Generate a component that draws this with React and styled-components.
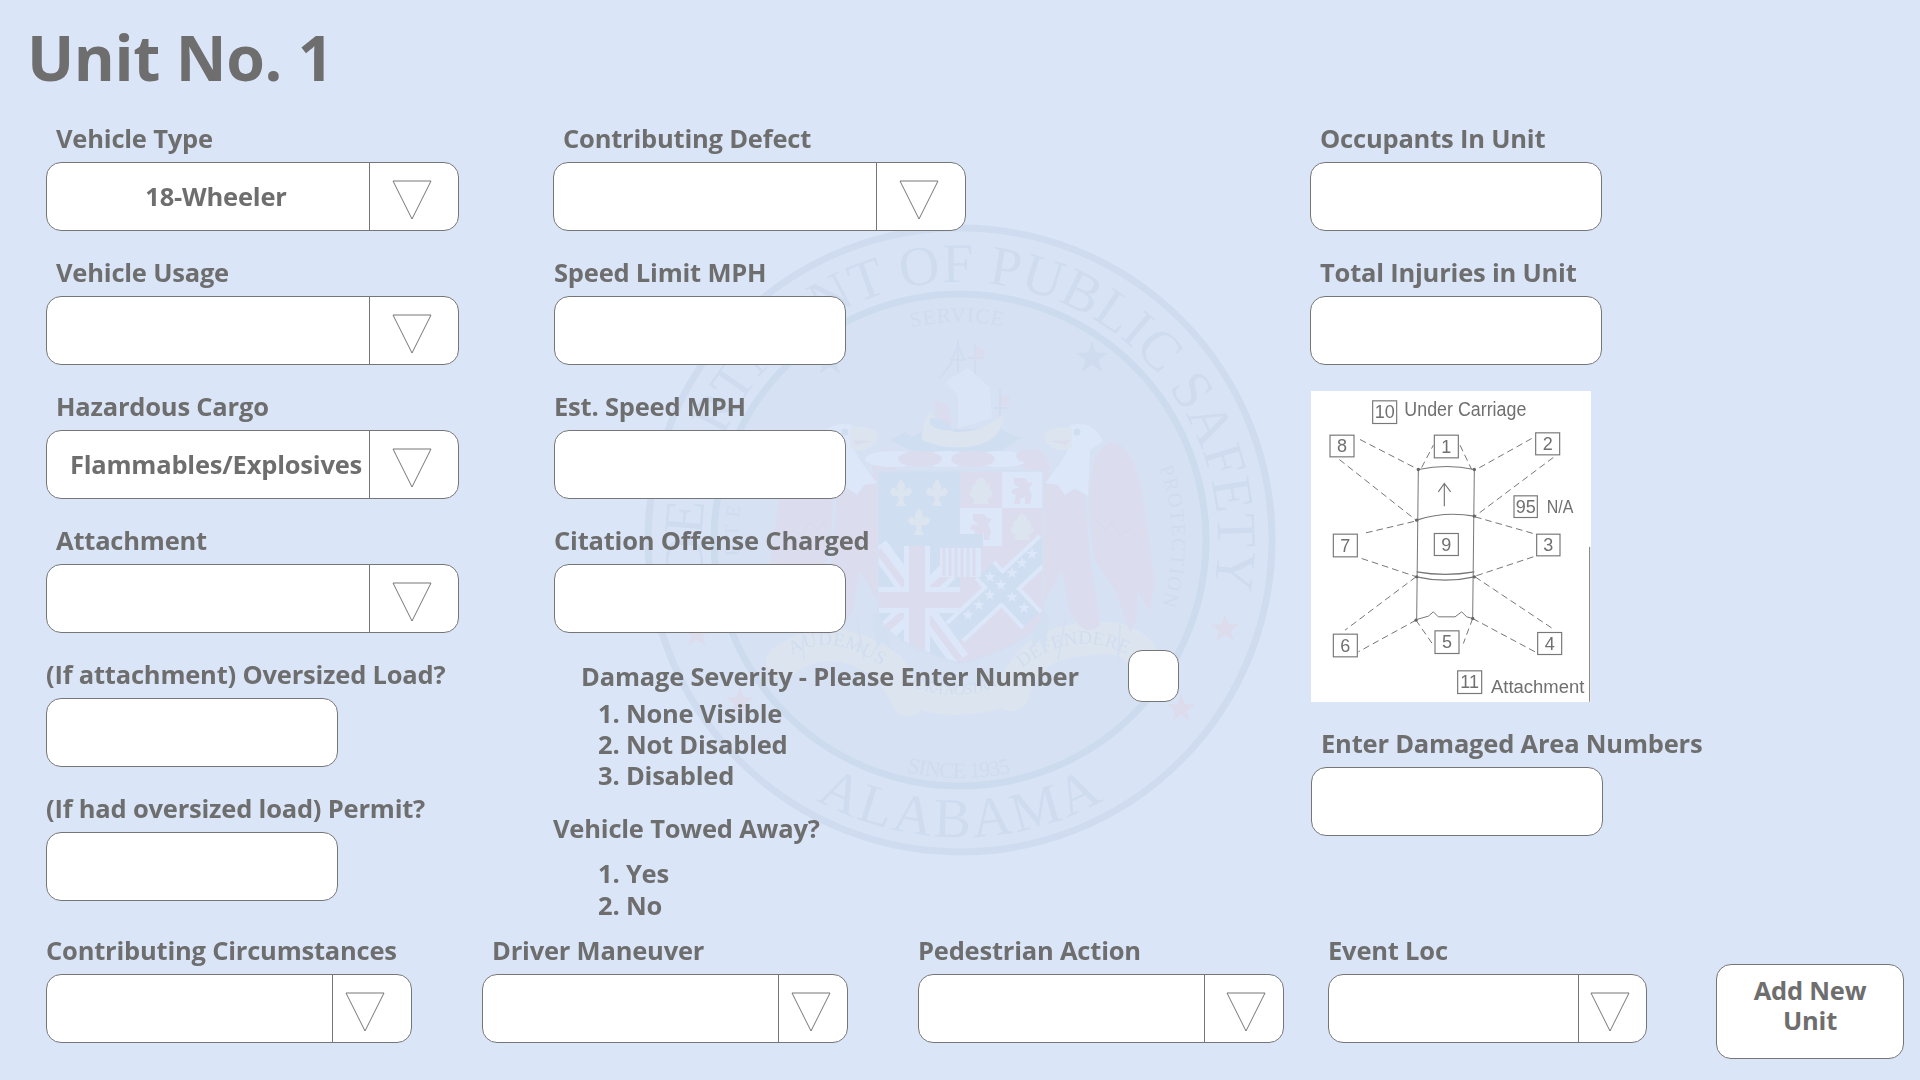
import React from "react";
import styled, { createGlobalStyle } from "styled-components";

const GlobalStyle = createGlobalStyle`
  html, body { margin: 0; padding: 0; background: #dae6f7; }
  * { box-sizing: border-box; }
`;

const Page = styled.div`
  position: relative;
  width: 1920px;
  height: 1080px;
  overflow: hidden;
  background: #dae6f7;
  color: #6e6e6e;
  font-family: "Open Sans", "Noto Sans", sans-serif;
  font-weight: 700;
  font-size: 25.5px;
  letter-spacing: -0.2px;
`;

const Watermark = styled.svg`
  position: absolute;
  left: 640px;
  top: 220px;
  width: 640px;
  height: 640px;
`;

const Content = styled.div`
  position: relative;
`;

const Title = styled.h1`
  margin: 0;
  height: 124px;
  padding: 16px 0 0 27px;
  font-size: 62.5px;
  line-height: 82px;
  font-weight: 700;
  letter-spacing: -0.4px;
`;

const Columns = styled.div`
  display: grid;
  grid-template-columns: 507px 757px 1fr;
  padding-left: 46px;
  height: 776px;
`;

const Column = styled.div`
  display: flex;
  flex-direction: column;
  align-items: flex-start;
  gap: 27px;
`;

const Field = styled.div`
  display: flex;
  flex-direction: column;
  align-items: flex-start;
  margin-left: ${(p) => p.$shift || 0}px;
`;

const Label = styled.div`
  height: 30px;
  line-height: 28px;
  margin-bottom: 8px;
  padding-left: ${(p) => p.$indent || 0}px;
  white-space: nowrap;
`;

const Input = styled.div`
  width: ${(p) => p.$w || 292}px;
  height: 69px;
  background: #fff;
  border: 1px solid #767676;
  border-radius: 15px;
`;

const SelectBox = styled.div`
  display: flex;
  width: ${(p) => p.$w}px;
  height: 69px;
  background: #fff;
  border: 1px solid #767676;
  border-radius: 15px;
`;

const SelectValue = styled.div`
  flex: 1;
  display: flex;
  align-items: center;
  justify-content: center;
  padding: 0 0 2px 16px;
  white-space: nowrap;
  overflow: hidden;
`;

const SelectArrow = styled.div`
  display: flex;
  justify-content: center;
  align-items: center;
  width: ${(p) => p.$w}px;
  padding: 6px ${(p) => p.$right ?? 4}px 0 ${(p) => p.$left || 0}px;
  border-left: 1px solid #767676;
`;

const DamageRow = styled.div`
  display: flex;
  align-items: center;
  height: 52px;
  margin: -10px 0 -4px 28px;
`;

const DamageLabel = styled.div`
  width: 547px;
  white-space: nowrap;
`;

const SmallInput = styled.div`
  width: 51px;
  height: 52px;
  background: #fff;
  border: 1px solid #767676;
  border-radius: 14px;
`;

const MiddleStack = styled.div`
  display: flex;
  flex-direction: column;
`;

const OptionList = styled.ol`
  margin: ${(p) => p.$top || 0}px 0 0;
  padding: 0 0 0 45px;
  list-style: none;
  line-height: ${(p) => p.$line || 31}px;
`;

const PlainLabel = styled.div`
  height: 30px;
  line-height: 30px;
  margin-top: 22px;
`;

const Diagram = styled.svg`
  display: block;
  width: 280px;
  height: 311px;
  margin: -1px 0 0 1px;
  background: #fff;
  filter: blur(0.4px);
  font-weight: 400;
  letter-spacing: 0;
`;

const BottomRow = styled.div`
  display: flex;
  align-items: flex-start;
  padding: 36px 0 0 46px;
`;

const BottomField = styled.div`
  width: ${(p) => p.$w}px;
  margin-right: ${(p) => p.$gap || 0}px;
`;

const AddButton = styled.button`
  width: 188px;
  height: 95px;
  margin: 28px 0 0 69px;
  padding: 0 0 13px;
  background: #fff;
  border: 1px solid #767676;
  border-radius: 15px;
  color: #6e6e6e;
  font: inherit;
  letter-spacing: inherit;
  line-height: 30px;
`;

const Triangle = ({ w = 40, h = 40 }) => (
  <svg width={w} height={h} viewBox="0 0 40 40" style={{ display: "block" }}>
    <path d="M1 1 H39 L20 39 Z" fill="#fff" stroke="#767676" strokeWidth="1" />
  </svg>
);

const Select = ({ w, arrow, right, left, value }) => (
  <SelectBox $w={w}>
    <SelectValue>{value}</SelectValue>
    <SelectArrow $w={arrow} $right={right} $left={left}>
      <Triangle />
    </SelectArrow>
  </SelectBox>
);

const CX = 960;
const CY = 540;
const PINK = "#dcdcec";
const PALE = "#dde9f9";
const BLUE = "#cfddf0";
const CREAM = "#dde6ee";

// arc path round the seal centre, angles in degrees from the top
const arc = (r, a0, a1) => {
  const pt = (a) => {
    const t = (a * Math.PI) / 180;
    return `${(CX + r * Math.sin(t)).toFixed(1)} ${(CY - r * Math.cos(t)).toFixed(1)}`;
  };
  const sweep = a1 > a0 ? 1 : 0;
  const large = Math.abs(a1 - a0) > 180 ? 1 : 0;
  return `M${pt(a0)} A${r} ${r} 0 ${large} ${sweep} ${pt(a1)}`;
};

const Star = ({ x, y, r, fill }) => {
  const pts = [];
  for (let i = 0; i < 10; i++) {
    const rad = i % 2 ? r * 0.4 : r;
    const t = (i * Math.PI) / 5;
    pts.push(`${(x + rad * Math.sin(t)).toFixed(1)},${(y - rad * Math.cos(t)).toFixed(1)}`);
  }
  return <polygon points={pts.join(" ")} fill={fill} />;
};

const Fleur = ({ x, y }) => (
  <path
    transform={`translate(${x} ${y})`}
    fill={CREAM}
    d="M0 -14 Q6 -7 3 -2 Q6 -6 9 -5 Q13 -1 8 3 L3 3 L2 7 L5 13 L-5 13 L-2 7 L-3 3 L-8 3 Q-13 -1 -9 -5 Q-6 -6 -3 -2 Q-6 -7 0 -14 Z"
  />
);

const Tree = ({ x, y }) => (
  <path
    transform={`translate(${x} ${y})`}
    fill={CREAM}
    d="M0 -13 Q5 -12 5 -7 Q10 -6 9 -1 Q13 1 10 6 L6 8 L8 13 L-8 13 L-6 8 L-10 6 Q-13 1 -9 -1 Q-10 -6 -5 -7 Q-5 -12 0 -13 Z"
  />
);

const Lion = ({ x, y }) => (
  <path
    transform={`translate(${x} ${y})`}
    fill={PINK}
    d="M-8 -13 L3 -13 L6 -9 L11 -8 L7 -3 L10 4 L8 13 L3 13 L3 6 L-2 8 L-2 13 L-8 13 L-6 4 L-11 2 L-9 -2 L-3 -3 L-8 -7 Z"
  />
);

const Eagle = () => (
  <g>
    <path d="M1017 463 Q1025 448 1040 450 Q1050 458 1050 470 L1040 478 Z" fill={PINK} />
    <path d="M1043 471 L1085 495 L1090 560 L1100 625 Q1085 640 1070 612 L1062 570 L1043 605 Z" fill={PINK} />
    <path d="M1113 443 Q1135 445 1143 500 Q1150 550 1155 580 L1150 612 L1137 590 Q1140 620 1130 632 L1115 590 L1095 560 Q1085 500 1092 470 Q1097 445 1113 443 Z" fill={PINK} />
    <path d="M1096 520 L1105 530 L1112 522 L1120 535 L1130 530 L1140 540" fill="none" stroke="#d6d9eb" strokeWidth="1" />
    <path d="M1070 425 Q1095 420 1103 442 L1090 450 L1088 496 L1075 488 L1065 495 L1058 485 L1045 483 Q1060 465 1068 450 Z" fill={PALE} />
    <path d="M1045 432 Q1060 425 1072 428 L1072 448 Q1055 455 1045 440 Z" fill={CREAM} />
    <path d="M1050 441 L1070 440 L1066 445 Z" fill={PINK} />
    <circle cx="1077" cy="432" r="3.5" fill={BLUE} />
    <path d="M1040 610 L1030 650 L1040 640 L1045 650 L1050 615" fill="#d3dff1" />
    <path d="M1065 620 L1058 660 M1120 625 L1118 660" stroke="#d3dff1" strokeWidth="2" />
  </g>
);

const Seal = () => (
  <Watermark viewBox="640 220 640 640">
    <defs>
      <clipPath id="shieldClip">
        <path d="M878 471 H1043 V610 Q1043 640 961 664 Q878 640 878 610 Z" />
      </clipPath>
      <path id="topArc" d={arc(258, -98, 103)} />
      <path id="bottomArc" d={arc(297, 209, 151)} />
      <path id="serviceArc" d={arc(218, -13, 11)} />
      <path id="protectionArc" d={arc(212, 70, 108)} />
      <path id="courtesyArc" d={arc(222, 250, 290)} />
      <path id="sinceArc" d={arc(238, 193, 167)} />
      <path id="audemusPath" d="M792 655 Q830 630 885 668" />
      <path id="defenderePath" d="M1022 668 Q1070 630 1122 652" />
      <path id="juraPath" d="M908 685 Q955 705 1000 685" />
    </defs>

    <circle cx={CX} cy={CY} r="312" fill="#d8e4f6" stroke="#cfdcf0" strokeWidth="7" />
    <circle cx={CX} cy={CY} r="246" fill="#d6e2f4" stroke="#cddbef" strokeWidth="7" />

    <g fontFamily="'Liberation Serif', serif" fontWeight="400" letterSpacing="0">
      <text fontSize="56" fill="#cfdcf0">
        <textPath href="#topArc" textLength="895" lengthAdjust="spacing">DEPARTMENT OF PUBLIC SAFETY</textPath>
      </text>
      <text fontSize="56" fill="#cfdcf0">
        <textPath href="#bottomArc" textLength="300" lengthAdjust="spacing">ALABAMA</textPath>
      </text>
      <text fontSize="21" fill="#cfdcf0">
        <textPath href="#serviceArc" textLength="92" lengthAdjust="spacing">SERVICE</textPath>
      </text>
      <text fontSize="20" fill="#cfdcf0">
        <textPath href="#protectionArc" textLength="140" lengthAdjust="spacing">PROTECTION</textPath>
      </text>
      <text fontSize="20" fill="#cfdcf0">
        <textPath href="#courtesyArc" textLength="150" lengthAdjust="spacing">COURTESY</textPath>
      </text>
      <text fontSize="22" fill="#cfdcf0">
        <textPath href="#sinceArc" textLength="105" lengthAdjust="spacing">SINCE 1935</textPath>
      </text>
    </g>

    <Star x={1092} y={358} r={17} fill="#cfdcf0" />
    <Star x={830} y={360} r={17} fill="#cfdcf0" />
    <Star x={1225} y={629} r={15} fill={PINK} />
    <Star x={1181} y={709} r={15} fill={PINK} />
    <Star x={697} y={634} r={15} fill={PINK} />
    <Star x={740} y={702} r={15} fill={PINK} />

    <g opacity="0.85">
      {/* ribbon with the motto */}
      <g fill="none" stroke={CREAM} strokeLinecap="round" strokeLinejoin="round">
        <path d="M782 662 Q830 625 890 668 L908 700" strokeWidth="32" />
        <path d="M905 690 Q955 712 1010 690" strokeWidth="28" />
        <path d="M1012 695 Q1030 640 1085 640 Q1120 632 1140 652" strokeWidth="32" />
      </g>
      <path d="M1075 640 L1075 605 L1087 605 L1087 640 Z" fill={CREAM} />
      <g fontFamily="'Liberation Serif', serif" fontWeight="400" letterSpacing="0" fill="#cfdbee">
        <text fontSize="19"><textPath href="#audemusPath" textLength="96" lengthAdjust="spacing">AUDEMUS</textPath></text>
        <text fontSize="19"><textPath href="#defenderePath" textLength="112" lengthAdjust="spacing">DEFENDERE</textPath></text>
        <text fontSize="16" fontStyle="italic"><textPath href="#juraPath" textLength="92" lengthAdjust="spacing">JURA NOSTRA</textPath></text>
      </g>

      <Eagle />
      <g transform="translate(1922 0) scale(-1 1)">
        <Eagle />
      </g>

      {/* ship on the crest */}
      <path d="M890 440 L905 432 L912 437 L925 430 L1000 428 L1012 435 L1022 438 L1005 448 L1000 455 L925 455 L905 448 Z" fill={BLUE} />
      <path d="M958 340 V372 M950 360 L966 360 M952 360 L958 345 L964 360 M975 345 V378 M968 358 L984 358 M940 378 L952 362 M1000 390 V418 M994 408 L1008 408" stroke="#cfdbef" strokeWidth="2" fill="none" />
      <path d="M975 346 L985 350 L984 358 L975 360 Z M1001 395 L1010 397 L1009 405 L1001 407 Z M934 400 L948 405 L952 425 L936 420 Z" fill={PINK} />
      <path d="M945 382 L968 368 L982 380 L990 388 L992 418 L958 428 L958 395 Z" fill="#dbe7f8" />
      <path d="M922 436 Q924 420 930 412 Q945 432 958 432 Q985 432 1003 414 Q1003 438 978 445 Q950 452 922 440 Z" fill={CREAM} />
      <path d="M930 418 Q948 418 952 430 Q938 432 930 424 Z" fill={BLUE} />

      {/* wreath */}
      <ellipse cx="893" cy="459" rx="28" ry="8" fill={PALE} />
      <ellipse cx="947" cy="459" rx="28" ry="8" fill={PALE} />
      <ellipse cx="1000" cy="459" rx="28" ry="8" fill={PALE} />
      <ellipse cx="920" cy="459" rx="22" ry="8" fill={PINK} />
      <ellipse cx="973" cy="459" rx="22" ry="8" fill={PINK} />
      <ellipse cx="1030" cy="456" rx="14" ry="7" fill={PINK} />

      {/* shield */}
      <g clipPath="url(#shieldClip)">
        <rect x="878" y="471" width="165" height="195" fill={PINK} />
        <rect x="878" y="471" width="82" height="75" fill={BLUE} />
        <rect x="960" y="471" width="42" height="37" fill={PINK} />
        <rect x="1002" y="471" width="41" height="37" fill={PALE} />
        <rect x="960" y="508" width="42" height="38" fill={PALE} />
        <rect x="1002" y="508" width="41" height="38" fill={PINK} />

        {/* union jack quarter */}
        <rect x="878" y="546" width="82" height="120" fill={BLUE} />
        <path d="M878 546 L960 660 M960 560 L878 640" stroke={PALE} strokeWidth="20" />
        <path d="M878 550 L960 660 M960 564 L878 636" stroke={PINK} strokeWidth="7" />
        <path d="M917 546 V666 M878 600 H960" stroke={PALE} strokeWidth="26" />
        <path d="M917 546 V666 M878 600 H960" stroke={PINK} strokeWidth="16" />

        {/* battle flag quarter */}
        <path d="M955 632 L1048 545 M985 570 L1032 620" stroke={PALE} strokeWidth="28" />
        <path d="M955 632 L1048 545 M985 570 L1032 620" stroke={BLUE} strokeWidth="20" />
        {[[968, 615], [979, 605], [990, 595], [1001, 585], [1012, 573], [1022, 563], [1032, 554], [990, 577], [1012, 597], [1024, 608]].map(([x, y]) => (
          <Star key={`${x}-${y}`} x={x} y={y} r={6} fill={PALE} />
        ))}
      </g>
      <Fleur x={901} y={493} />
      <Fleur x={937} y={493} />
      <Fleur x={919} y={522} />
      <Tree x={981} y={491} />
      <Lion x={1022} y={491} />
      <Lion x={981} y={527} />
      <Tree x={1022} y={527} />

      {/* small escutcheon */}
      <rect x="938" y="534" width="45" height="14" fill={BLUE} />
      <rect x="940" y="548" width="41" height="29" fill={PALE} />
      <path d="M944 548 V576 M950 548 V576 M956 548 V578 M962 548 V578 M968 548 V578 M974 548 V576" stroke={PINK} strokeWidth="3" />
      <path d="M878 471 H1043 V610 Q1043 640 961 664 Q878 640 878 610 Z" fill="none" stroke="#d3dff1" strokeWidth="1.5" />
    </g>
  </Watermark>
);

const BOXES = [
  ["10", 248, 62, 72, 68],
  ["8", 120, 165, 72, 65],
  ["1", 433, 165, 72, 68],
  ["2", 737, 158, 72, 66],
  ["95", 672, 347, 70, 65],
  ["7", 130, 462, 72, 68],
  ["9", 433, 460, 72, 66],
  ["3", 740, 462, 70, 65],
  ["6", 130, 762, 72, 68],
  ["5", 435, 752, 72, 68],
  ["4", 743, 757, 72, 66],
  ["11", 503, 872, 72, 68],
];

const DASHES = [
  [210, 178, 385, 268],
  [148, 238, 378, 420],
  [395, 262, 430, 195],
  [510, 195, 545, 268],
  [725, 175, 555, 270],
  [790, 232, 555, 408],
  [555, 410, 730, 460],
  [228, 458, 380, 422],
  [215, 535, 380, 590],
  [730, 530, 555, 588],
  [555, 590, 792, 748],
  [378, 590, 165, 750],
  [378, 720, 205, 815],
  [378, 720, 430, 795],
  [548, 715, 520, 790],
  [548, 715, 735, 815],
];

const DamageDiagram = () => (
  <Diagram viewBox="63 33 840 932">
    <g stroke="#777" strokeWidth="3" strokeDasharray="20 12" fill="none">
      {DASHES.map(([x1, y1, x2, y2]) => (
        <line key={`${x1}-${y1}-${x2}`} x1={x1} y1={y1} x2={x2} y2={y2} />
      ))}
    </g>
    <g stroke="#777" strokeWidth="3.5" fill="none">
      <path d="M385 268 L380 720 M553 268 L548 715" strokeWidth="3" />
      <path d="M385 268 Q470 250 553 268" />
      <path d="M380 420 Q465 392 553 408" />
      <path d="M380 575 Q465 590 553 575" />
      <path d="M380 590 Q465 610 553 590" />
      <path d="M380 718 L415 708 L430 695 L445 710 H495 L515 695 L530 710 L548 715" strokeWidth="3" />
      <path d="M463 378 V310 M445 335 L463 310 L482 335" />
      <path d="M899 500 V965" strokeWidth="3" stroke="#777" />
    </g>
    <g fill="#666">
      {[[385, 268], [553, 268], [380, 420], [553, 408], [380, 590], [553, 590], [378, 720], [548, 715]].map(([x, y]) => (
        <circle key={`${x}-${y}`} cx={x} cy={y} r="5" />
      ))}
    </g>
    <g fontFamily="'Liberation Sans', sans-serif" fontWeight="400" fill="#707070">
      {BOXES.map(([n, x, y, w, h]) => (
        <g key={n}>
          <rect x={x} y={y} width={w} height={h} fill="#fff" stroke="#777" strokeWidth="3.5" />
          <text x={x + w / 2} y={y + h / 2 + 19} fontSize="54" textAnchor="middle">{n}</text>
        </g>
      ))}
      <text x="343" y="108" fontSize="58" textLength="366" lengthAdjust="spacingAndGlyphs">Under Carriage</text>
      <text x="770" y="400" fontSize="56" textLength="80" lengthAdjust="spacingAndGlyphs">N/A</text>
      <text x="603" y="938" fontSize="54" textLength="280" lengthAdjust="spacingAndGlyphs">Attachment</text>
    </g>
  </Diagram>
);

export default function App() {
  return (
    <>
      <GlobalStyle />
      <Page>
        <Seal />
        <Content>
          <Title>Unit No. 1</Title>
          <Columns>
            <Column>
              <Field>
                <Label $indent={10}>Vehicle Type</Label>
                <Select w={413} arrow={89} value="18-Wheeler" />
              </Field>
              <Field>
                <Label $indent={10}>Vehicle Usage</Label>
                <Select w={413} arrow={89} />
              </Field>
              <Field>
                <Label $indent={10}>Hazardous Cargo</Label>
                <Select w={413} arrow={89} value="Flammables/Explosives" />
              </Field>
              <Field>
                <Label $indent={10}>Attachment</Label>
                <Select w={413} arrow={89} />
              </Field>
              <Field>
                <Label>(If attachment) Oversized Load?</Label>
                <Input />
              </Field>
              <Field>
                <Label>(If had oversized load) Permit?</Label>
                <Input />
              </Field>
            </Column>

            <Column>
              <Field>
                <Label $indent={10}>Contributing Defect</Label>
                <Select w={413} arrow={89} />
              </Field>
              <Field $shift={1}>
                <Label>Speed Limit MPH</Label>
                <Input />
              </Field>
              <Field $shift={1}>
                <Label>Est. Speed MPH</Label>
                <Input />
              </Field>
              <Field $shift={1}>
                <Label>Citation Offense Charged</Label>
                <Input />
              </Field>
              <MiddleStack>
                <DamageRow>
                  <DamageLabel>Damage Severity - Please Enter Number</DamageLabel>
                  <SmallInput />
                </DamageRow>
                <OptionList>
                  <li>1. None Visible</li>
                  <li>2. Not Disabled</li>
                  <li>3. Disabled</li>
                </OptionList>
                <PlainLabel>Vehicle Towed Away?</PlainLabel>
                <OptionList $top={14} $line={32}>
                  <li>1. Yes</li>
                  <li>2. No</li>
                </OptionList>
              </MiddleStack>
            </Column>

            <Column>
              <Field>
                <Label $indent={10}>Occupants In Unit</Label>
                <Input />
              </Field>
              <Field>
                <Label $indent={10}>Total Injuries in Unit</Label>
                <Input />
              </Field>
              <DamageDiagram />
              <Field $shift={1}>
                <Label $indent={10}>Enter Damaged Area Numbers</Label>
                <Input />
              </Field>
            </Column>
          </Columns>

          <BottomRow>
            <BottomField $w={366} $gap={70}>
              <Label>Contributing Circumstances</Label>
              <Select w={366} arrow={79} right={14} />
            </BottomField>
            <BottomField $w={366} $gap={70}>
              <Label $indent={10}>Driver Maneuver</Label>
              <Select w={366} arrow={69} />
            </BottomField>
            <BottomField $w={366} $gap={44}>
              <Label>Pedestrian Action</Label>
              <Select w={366} arrow={79} right={0} left={3} />
            </BottomField>
            <BottomField $w={319}>
              <Label>Event Loc</Label>
              <Select w={319} arrow={68} right={6} />
            </BottomField>
            <AddButton>Add New<br />Unit</AddButton>
          </BottomRow>
        </Content>
      </Page>
    </>
  );
}
